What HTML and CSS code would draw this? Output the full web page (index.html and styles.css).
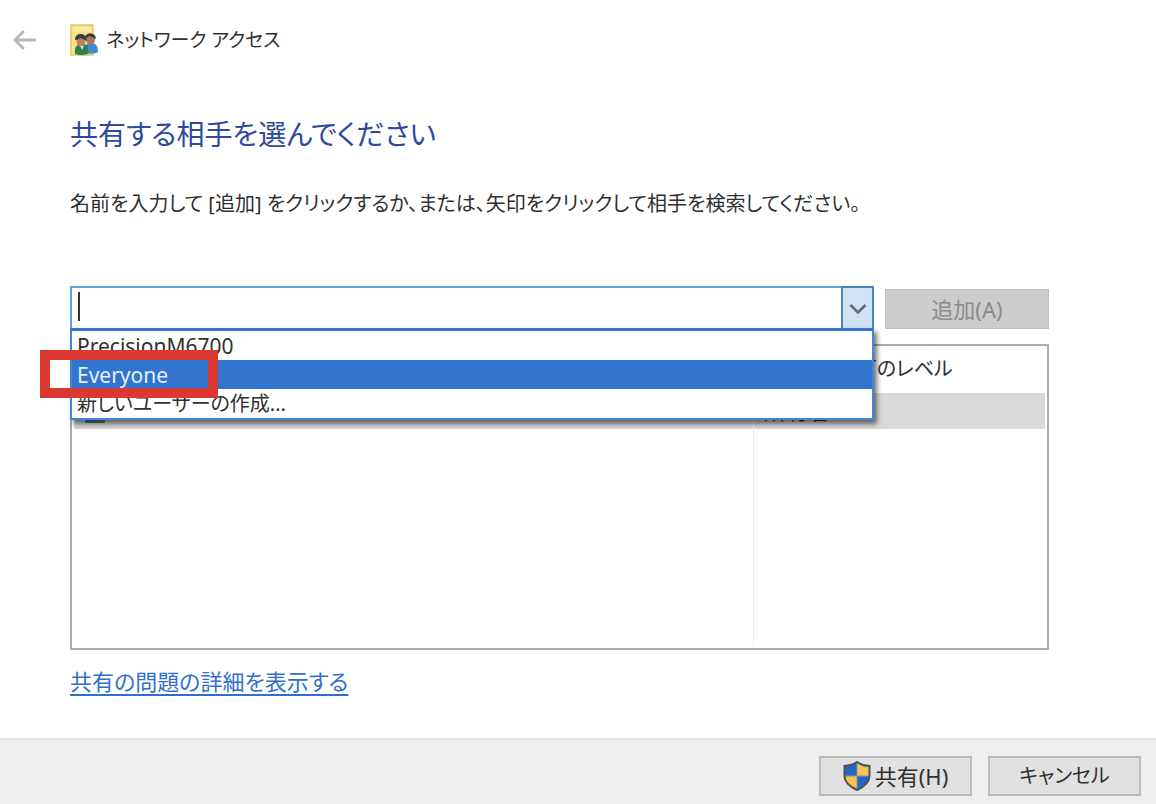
FILE: index.html
```html
<!DOCTYPE html>
<html lang="ja">
<head>
<meta charset="utf-8">
<meta name="viewport" content="width=device-width, initial-scale=1">
<title>ネットワーク アクセス</title>
<link rel="stylesheet" href="styles.css">
</head>
<body>
<header class="titlebar">
  <button class="back" type="button" aria-label="戻る">
    <svg width="24" height="20" viewBox="0 0 24 20" fill="none" stroke="#b9b9b9" stroke-width="2.800"><path d="M23 10H2M11 1L2 10l9 9"/></svg>
  </button>
  <svg class="app-icon" width="28" height="32" viewBox="0 0 28 32">
    <path d="M1 1h22v30H1z" fill="#f9e08a" stroke="#e6c65c" stroke-width="1.5"/>
    <path d="M3 3h18v5H3z" fill="#fbe9a5"/>
    <path d="M14 29c0-7 2-10 7-10s7 3 7 9c-3 2-8 2-14 1z" fill="#4388cf"/>
    <ellipse cx="20.500" cy="15" rx="4.500" ry="5.500" fill="#a9795a"/>
    <path d="M15 14c0-6 11-6 11 1-3-1-5-3-7-3-1 1-2 2-4 2z" fill="#3b3c3d"/>
    <path d="M5 30c-1-7 2-10 7-10s7 3 6 10c-4 1.500-9 1.500-13 0z" fill="#2f8050"/>
    <ellipse cx="11" cy="17" rx="4.500" ry="5.500" fill="#b48662"/>
    <path d="M5 16c0-8 12-8 12 1-3-1-5-3-7-3-1 1-3 2-5 2z" fill="#363d3b"/>
    <path d="M10 22l2 4 2-4z" fill="#cde2c9"/>
  </svg>
  <span class="app-title">ネットワーク アクセス</span>
</header>

<main class="content">
  <h1 class="heading">共有する相手を選んでください</h1>
  <label class="instruction" for="person">名前を入力して [追加] をクリックするか、または、矢印をクリックして相手を検索してください。</label>

  <div class="picker">
    <div class="combo">
      <input class="combo-input" id="person" type="text" role="combobox" aria-expanded="true" aria-controls="people" autocomplete="off">
      <span class="caret"></span>
      <button class="combo-toggle" type="button" aria-label="一覧を開く">
        <svg width="18" height="12" viewBox="0 0 18 12" fill="none" stroke="#636b73" stroke-width="2.600"><path d="M1.500 2L9 9.500 16.500 2"/></svg>
      </button>
      <ul class="options" id="people" role="listbox">
        <li class="option" role="option">PrecisionM6700</li>
        <li class="option selected" role="option" aria-selected="true">Everyone</li>
        <li class="option create" role="option">新しいユーザーの作成...</li>
      </ul>
      <span class="highlight-frame"></span>
    </div>
    <button class="add" type="button" disabled>追加(A)</button>
  </div>

  <div class="list">
    <table class="people">
      <thead>
        <tr><th class="name-col" scope="col">名前</th><th scope="col">アクセス許可のレベル</th></tr>
      </thead>
      <tbody>
        <tr class="current">
          <td class="name-col"><svg width="22" height="28" viewBox="0 0 22 28"><circle cx="11" cy="8" r="6" fill="#b48662"/><path d="M1 27c0-16 20-16 20 0z" fill="#56809a"/></svg></td>
          <td>所有者</td>
        </tr>
        <tr class="rest"><td class="name-col"></td><td></td></tr>
      </tbody>
    </table>
  </div>
  <a class="details" href="#details">共有の問題の詳細を表示する</a>
</main>

<footer class="actions">
  <button class="action" type="button">
    <svg width="28" height="30" viewBox="0 0 28 30">
      <clipPath id="shield"><path d="M14 1c4 3 8 4 12.500 4v10c0 6-6 11-12.500 14C7.500 26 1.500 21 1.500 15V5C6 5 10 4 14 1z"/></clipPath>
      <g clip-path="url(#shield)">
        <path d="M0 0h14v15H0zM14 15h14v15H14z" fill="#2464c4"/>
        <path d="M14 0h14v15H14zM0 15h14v15H0z" fill="#fac155"/>
        <path d="M14 0v30M0 15h28" stroke="#8a9a91"/>
      </g>
      <path d="M14 1c4 3 8 4 12.500 4v10c0 6-6 11-12.500 14C7.500 26 1.500 21 1.500 15V5C6 5 10 4 14 1z" fill="none" stroke="#47525a" stroke-width="2"/>
    </svg>
    <span>共有(H)</span>
  </button>
  <button class="action cancel" type="button">キャンセル</button>
</footer>
</body>
</html>
```
FILE: styles.css
```css
* { box-sizing: border-box; }

body {
  margin: 0;
  min-height: 100vh;
  display: flex;
  flex-direction: column;
  background: #fff;
  color: #303030;
  font-family: "Noto Sans", "Noto Sans CJK JP", sans-serif;
  font-size: 22px;
  line-height: 30px;
  font-feature-settings: "palt";
}

button, input {
  font: inherit;
  font-feature-settings: inherit;
  color: inherit;
  margin: 0;
  padding: 0;
  border-radius: 0;
}

button {
  display: flex;
  align-items: center;
  justify-content: center;
}

.titlebar {
  display: flex;
  align-items: center;
  height: 80px;
  padding-left: 13px;
}

.back {
  width: 24px;
  border: 0;
  background: none;
}

.app-icon { margin: 0 8px 0 33px; }

.app-title { font-size: 19px; }

.content {
  flex: 1;
  display: flex;
  flex-direction: column;
  align-items: flex-start;
  padding: 34px 107px 0 70px;
}

.heading {
  margin: 0;
  color: #2c4a9e;
  font-size: 28px;
  font-weight: 400;
  line-height: 40px;
}

.instruction {
  margin-top: 34px;
  font-size: 20px;
  line-height: 32px;
  white-space: nowrap;
}

.picker {
  align-self: stretch;
  display: flex;
  align-items: center;
  gap: 11px;
  margin-top: 66px;
}

.combo {
  position: relative;
  flex: 1;
  display: flex;
  height: 45px;
}

.combo-input {
  flex: 1;
  min-width: 0;
  padding: 0 7px;
  border: 2px solid #62a0e2;
  border-right: 0;
  background: #fff;
  outline: 0;
}

.caret {
  position: absolute;
  left: 8px;
  top: 6px;
  width: 2px;
  height: 29px;
  background: #333;
}

.combo-toggle {
  width: 33px;
  border: 2px solid #4a83bd;
  background: #d0e2f5;
}

.options {
  position: absolute;
  z-index: 1;
  top: 42px;
  left: 0;
  right: 0;
  margin: 0;
  padding: 0;
  list-style: none;
  background: #fff;
  border: 2px solid #3f87d8;
  border-top: 3px solid #3275d0;
  box-shadow: 3px 4px 5px rgba(0, 0, 0, 0.55);
}

.option {
  height: 29px;
  padding-left: 5px;
  font-size: 21px;
  line-height: 30px;
  overflow: hidden;
}

.option.create { font-size: 20px; }

.option.selected {
  background: #3275d0;
  color: #e6f0fc;
}

.highlight-frame {
  position: absolute;
  z-index: 2;
  left: -30px;
  top: 64px;
  width: 178px;
  height: 48px;
  border: 10px solid #db3733;
}

.add {
  width: 164px;
  height: 40px;
  border: 1px solid #c0c0c0;
  background: #ccc;
  color: #8b8b8b;
}

.list {
  align-self: stretch;
  margin-top: 13px;
  padding: 2px;
  border: 2px solid #a9abb2;
}

.people {
  width: 100%;
  border-collapse: collapse;
  table-layout: fixed;
}

.people th, .people td {
  padding: 0 0 0 10px;
  font-weight: 400;
  text-align: left;
}

.people th {
  height: 45px;
  padding-bottom: 4px;
  font-size: 20px;
}

.people .name-col {
  width: 70%;
  border-right: 1px solid #e9eff5;
}

.people .current td {
  height: 36px;
  padding-bottom: 2px;
  background: #d9d9d9;
}

.current svg { display: block; }

.rest td { height: 217px; }

.details {
  margin-top: 16px;
  color: #2f70cc;
  text-decoration-thickness: 2px;
  text-underline-offset: 4px;
}

.actions {
  display: flex;
  justify-content: flex-end;
  align-items: center;
  gap: 16px;
  height: 66px;
  padding: 8px 15px 0 15px;
  border-top: 2px solid #e6e6e6;
  background: #efefef;
}

.action {
  width: 153px;
  height: 40px;
  gap: 4px;
  border: 2px solid #bcbcbc;
  background: #e1e1e1;
}

.cancel { font-size: 20px; }
```
